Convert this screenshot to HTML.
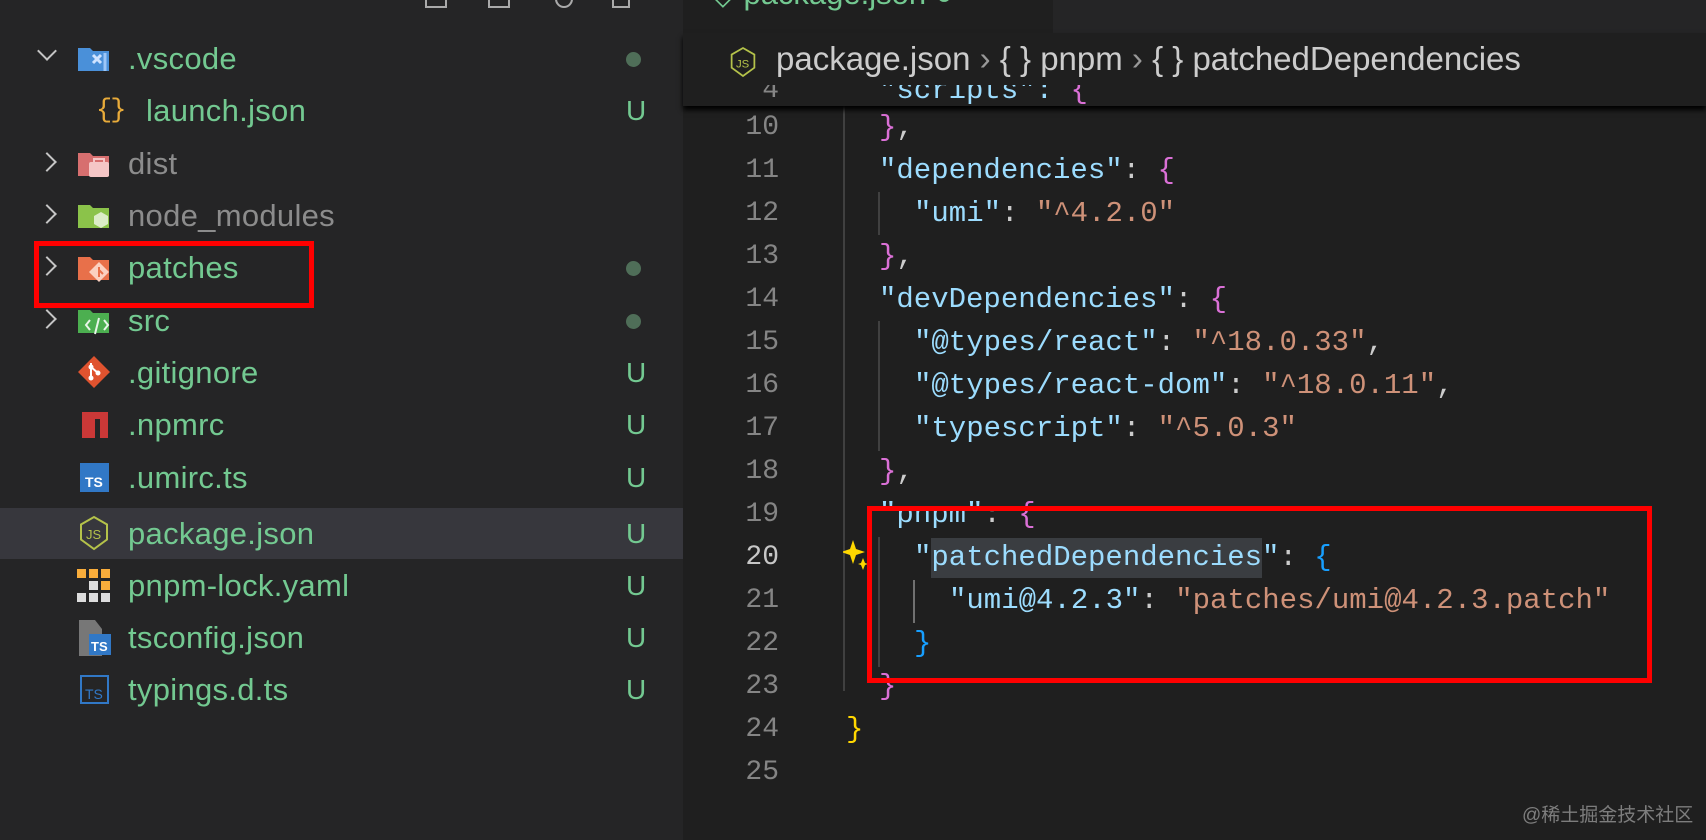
<!DOCTYPE html>
<html><head><meta charset="utf-8"><style>
*{margin:0;padding:0;box-sizing:border-box}
body{width:1706px;height:840px;background:#1f1f1f;overflow:hidden;position:relative;font-family:"Liberation Sans",sans-serif}
.side{position:absolute;left:0;top:0;width:683px;height:840px;background:#252526}
.row{position:absolute;left:0;width:683px;height:52px;line-height:52px;font-size:31px;color:#73c991}
.row .t{position:absolute;left:128px;letter-spacing:0.3px}
.row .u{position:absolute;left:626px;font-size:28px}
.dot{position:absolute;left:626px;top:19px;width:15px;height:15px;border-radius:50%;background:#4f6e58}
.chev{position:absolute;left:40px;top:17px;width:14px;height:14px;border-right:2.5px solid #c5c5c5;border-bottom:2.5px solid #c5c5c5;transform:rotate(-45deg)}
.chev.d{transform:rotate(45deg);top:11px;left:40px}
.ic{position:absolute;left:77px;top:12px}
.ed{position:absolute;left:683px;top:0;width:1023px;height:840px;background:#1f1f1f}
.code{position:absolute;font-family:"Liberation Mono",monospace;font-size:29px;white-space:pre;height:43px;line-height:43px}
.ln{position:absolute;width:100px;left:679px;text-align:right;font-family:"Liberation Mono",monospace;font-size:28px;color:#858585;line-height:43px}
.k{color:#9cdcfe}.s{color:#ce9178}.p{color:#da70d6}.b{color:#179fff}.y{color:#ffd700}.w{color:#cccccc}
.g{position:absolute;width:1.5px;background:#404040}
</style></head><body>
<div class="side">
  <div style="position:absolute;left:425px;top:0;width:22px;height:8px;border:2px solid #aaa;border-top:none"></div>
  <div style="position:absolute;left:488px;top:0;width:22px;height:8px;border:2px solid #aaa;border-top:none"></div>
  <div style="position:absolute;left:555px;top:-10px;width:18px;height:18px;border:2px solid #aaa;border-radius:50%"></div>
  <div style="position:absolute;left:612px;top:0;width:18px;height:8px;border:2px solid #aaa;border-top:none"></div>

  <div class="row" style="top:33px"><div class="chev d"></div>
    <svg class="ic" width="34" height="28" viewBox="0 0 34 28"><path d="M1 3h12l3 3h16v20H1z" fill="#4a90d9"/><path d="M16 10l8 8M24 10l-8 8" stroke="#cfe3ff" stroke-width="3"/><path d="M28 8v18" stroke="#9cc6f7" stroke-width="3"/></svg>
    <span class="t">.vscode</span><div class="dot"></div></div>
  <div class="row" style="top:85px"><span style="position:absolute;left:96px;color:#e8ab3a;font-family:'Liberation Mono',monospace;font-size:27px;letter-spacing:-2px">{}</span><span class="t" style="left:146px">launch.json</span><span class="u">U</span></div>
  <div class="row" style="top:138px;color:#8c8c8c"><div class="chev"></div>
    <svg class="ic" width="34" height="28" viewBox="0 0 34 28"><path d="M1 3h12l3 3h16v20H1z" fill="#d76f6f"/><rect x="12" y="12" width="20" height="15" rx="2" fill="#f5c6c6"/><path d="M17 12v-3h10v3" stroke="#f5c6c6" stroke-width="2" fill="none"/></svg>
    <span class="t">dist</span></div>
  <div class="row" style="top:190px;color:#8c8c8c"><div class="chev"></div>
    <svg class="ic" width="34" height="30" viewBox="0 0 34 30"><path d="M1 3h12l3 3h16v20H1z" fill="#8bc34a"/><path d="M24 10l7 4v8l-7 4-7-4v-8z" fill="#dcedc8"/></svg>
    <span class="t">node_modules</span></div>
  <div class="row" style="top:242px"><div class="chev"></div>
    <svg class="ic" width="34" height="30" viewBox="0 0 34 30"><path d="M1 3h12l3 3h16v20H1z" fill="#e8704a"/><path d="M22 8l10 10-10 10-10-10z" fill="#fbd0c0"/><path d="M22 13v10M22 16l4 4" stroke="#e8704a" stroke-width="2"/></svg>
    <span class="t">patches</span><div class="dot"></div></div>
  <div class="row" style="top:295px"><div class="chev"></div>
    <svg class="ic" width="34" height="30" viewBox="0 0 34 30"><path d="M1 3h12l3 3h16v20H1z" fill="#4caf50"/><path d="M13 13l-4 5 4 5M27 13l4 5-4 5M22 11l-4 16" stroke="#e8f5e9" stroke-width="2" fill="none"/></svg>
    <span class="t">src</span><div class="dot"></div></div>
  <div class="row" style="top:347px">
    <svg class="ic" width="34" height="34" viewBox="0 0 34 34" style="top:8px"><path d="M17 1l16 16-16 16L1 17z" fill="#e0532f"/><circle cx="14" cy="12" r="2.5" fill="#fff"/><circle cx="14" cy="23" r="2.5" fill="#fff"/><circle cx="21" cy="18" r="2.5" fill="#fff"/><path d="M14 8v15M14 12l7 6" stroke="#fff" stroke-width="2"/></svg>
    <span class="t">.gitignore</span><span class="u">U</span></div>
  <div class="row" style="top:399px">
    <svg class="ic" width="30" height="30" viewBox="0 0 30 30" style="left:80px;top:11px"><path d="M2 28V2h26v26h-8V9h-5v19z" fill="#cb3837"/></svg>
    <span class="t">.npmrc</span><span class="u">U</span></div>
  <div class="row" style="top:452px">
    <div style="position:absolute;left:80px;top:11px;width:29px;height:29px;background:#3178c6;color:#fff;font-size:14px;line-height:14px;padding:12px 0 0 5px;font-weight:bold">TS</div>
    <span class="t">.umirc.ts</span><span class="u">U</span></div>
  <div class="row" style="top:508px;height:51px;background:#37373d">
    <svg class="ic" width="32" height="36" viewBox="0 0 32 36" style="left:78px;top:7px"><path d="M16 2l13 7.5v15L16 34 3 24.5v-15z" fill="none" stroke="#b4c24a" stroke-width="2"/><text x="8" y="24" font-size="13" fill="#b4c24a" font-family="Liberation Sans">JS</text></svg>
    <span class="t">package.json</span><span class="u">U</span></div>
  <div class="row" style="top:560px">
    <svg class="ic" width="34" height="34" viewBox="0 0 34 34" style="top:9px"><rect x="0" y="0" width="9" height="9" fill="#f9ad3b"/><rect x="12" y="0" width="9" height="9" fill="#f9ad3b"/><rect x="24" y="0" width="9" height="9" fill="#f9ad3b"/><rect x="12" y="12" width="9" height="9" fill="#ddd"/><rect x="24" y="12" width="9" height="9" fill="#f9ad3b"/><rect x="0" y="24" width="9" height="9" fill="#ddd"/><rect x="12" y="24" width="9" height="9" fill="#ddd"/><rect x="24" y="24" width="9" height="9" fill="#ddd"/></svg>
    <span class="t">pnpm-lock.yaml</span><span class="u">U</span></div>
  <div class="row" style="top:612px">
    <svg class="ic" width="34" height="36" viewBox="0 0 34 36" style="left:79px;top:8px"><path d="M0 0h16l7 9v27H0z" fill="#777"/><rect x="10" y="14" width="22" height="21" fill="#3178c6"/><text x="12" y="31" font-size="13" fill="#fff" font-family="Liberation Sans" font-weight="bold">TS</text></svg>
    <span class="t">tsconfig.json</span><span class="u">U</span></div>
  <div class="row" style="top:664px">
    <div style="position:absolute;left:80px;top:11px;width:29px;height:29px;border:2px solid #3178c6;color:#3178c6;font-size:14px;line-height:14px;padding:10px 0 0 3px">TS</div>
    <span class="t">typings.d.ts</span><span class="u">U</span></div>
  <div style="position:absolute;left:34px;top:241px;width:280px;height:67px;border:5px solid #f00"></div>
</div>

<div class="ed">
  <div style="position:absolute;left:0;top:0;width:370px;height:33px;background:#1f1f1f"></div>
  <div style="position:absolute;left:370px;top:0;width:653px;height:33px;background:#252526"></div>
  <div style="position:absolute;left:28px;top:-24px;font-size:31px;color:#73c991">◇ package.json ●</div>
</div>
<!-- sticky -->
<div style="position:absolute;left:683px;top:33px;width:1023px;height:73px;background:#1f1f1f;box-shadow:0 4px 5px #000;overflow:hidden;z-index:2">
  <div class="code k" style="left:196px;top:36px">"scripts": <span class="p">{</span></div>
  <div class="ln" style="left:-4px;top:36px;color:#858585">4</div>
  <div style="position:absolute;left:0;top:0;width:1023px;height:52px;background:#1f1f1f"></div>
  <svg style="position:absolute;left:46px;top:11px" width="28" height="36" viewBox="0 0 32 36"><path d="M16 2l13 7.5v15L16 34 3 24.5v-15z" fill="none" stroke="#b4c24a" stroke-width="2"/><text x="8" y="24" font-size="13" fill="#b4c24a" font-family="Liberation Sans">JS</text></svg>
  <div style="position:absolute;left:93px;top:7px;font-size:33px;color:#cccccc;white-space:pre">package.json <span style="color:#999">›</span> { } pnpm <span style="color:#999">›</span> { } patchedDependencies</div>
</div>

<div class="g" style="left:843px;top:106px;height:585px"></div>
<div class="g" style="left:878px;top:192px;height:43px"></div>
<div class="g" style="left:878px;top:321px;height:130px"></div>
<div class="g" style="left:878px;top:537px;height:130px"></div>
<div class="g" style="left:913px;top:580px;height:43px;background:#707070"></div>

<div class="ln" style="top:106px">10</div>
<div class="ln" style="top:149px">11</div>
<div class="ln" style="top:192px">12</div>
<div class="ln" style="top:235px">13</div>
<div class="ln" style="top:278px">14</div>
<div class="ln" style="top:321px">15</div>
<div class="ln" style="top:364px">16</div>
<div class="ln" style="top:407px">17</div>
<div class="ln" style="top:450px">18</div>
<div class="ln" style="top:493px">19</div>
<div class="ln" style="top:536px;color:#c6c6c6">20</div>
<div class="ln" style="top:579px">21</div>
<div class="ln" style="top:622px">22</div>
<div class="ln" style="top:665px">23</div>
<div class="ln" style="top:708px">24</div>
<div class="ln" style="top:751px">25</div>

<div class="code" style="left:879px;top:106px"><span class="p">}</span><span class="w">,</span></div>
<div class="code" style="left:879px;top:149px"><span class="k">"dependencies"</span><span class="w">: </span><span class="p">{</span></div>
<div class="code" style="left:914px;top:192px"><span class="k">"umi"</span><span class="w">: </span><span class="s">"^4.2.0"</span></div>
<div class="code" style="left:879px;top:235px"><span class="p">}</span><span class="w">,</span></div>
<div class="code" style="left:879px;top:278px"><span class="k">"devDependencies"</span><span class="w">: </span><span class="p">{</span></div>
<div class="code" style="left:914px;top:321px"><span class="k">"@types/react"</span><span class="w">: </span><span class="s">"^18.0.33"</span><span class="w">,</span></div>
<div class="code" style="left:914px;top:364px"><span class="k">"@types/react-dom"</span><span class="w">: </span><span class="s">"^18.0.11"</span><span class="w">,</span></div>
<div class="code" style="left:914px;top:407px"><span class="k">"typescript"</span><span class="w">: </span><span class="s">"^5.0.3"</span></div>
<div class="code" style="left:879px;top:450px"><span class="p">}</span><span class="w">,</span></div>
<div class="code" style="left:879px;top:493px"><span class="k">"pnpm"</span><span class="w">: </span><span class="p">{</span></div>
<div style="position:absolute;left:931px;top:538px;width:331px;height:40px;background:#3a3d41"></div>
<div class="code" style="left:914px;top:536px"><span class="k">"patchedDependencies"</span><span class="w">: </span><span class="b">{</span></div>
<div class="code" style="left:949px;top:579px"><span class="k">"umi@4.2.3"</span><span class="w">: </span><span class="s">"patches/umi@4.2.3.patch"</span></div>
<div class="code" style="left:914px;top:622px"><span class="b">}</span></div>
<div class="code" style="left:879px;top:665px"><span class="p">}</span></div>
<div class="code" style="left:846px;top:708px"><span class="y">}</span></div>

<svg style="position:absolute;left:843px;top:540px" width="26" height="30" viewBox="0 0 26 30"><path d="M10 0l3 9 9 3-9 3-3 9-3-9-9-3 9-3z" fill="#ffd700"/><path d="M20 18l2 5 3 1-3 1-2 5-2-5-3-1 3-1z" fill="#ffd700"/></svg>

<div style="position:absolute;left:867px;top:506px;width:785px;height:177px;border:5px solid #f00"></div>
<div style="position:absolute;left:1522px;top:800px;font-family:'Liberation Sans','Noto Sans CJK SC',sans-serif;font-size:19px;color:#7d7d7d">@稀土掘金技术社区</div>
</body></html>
